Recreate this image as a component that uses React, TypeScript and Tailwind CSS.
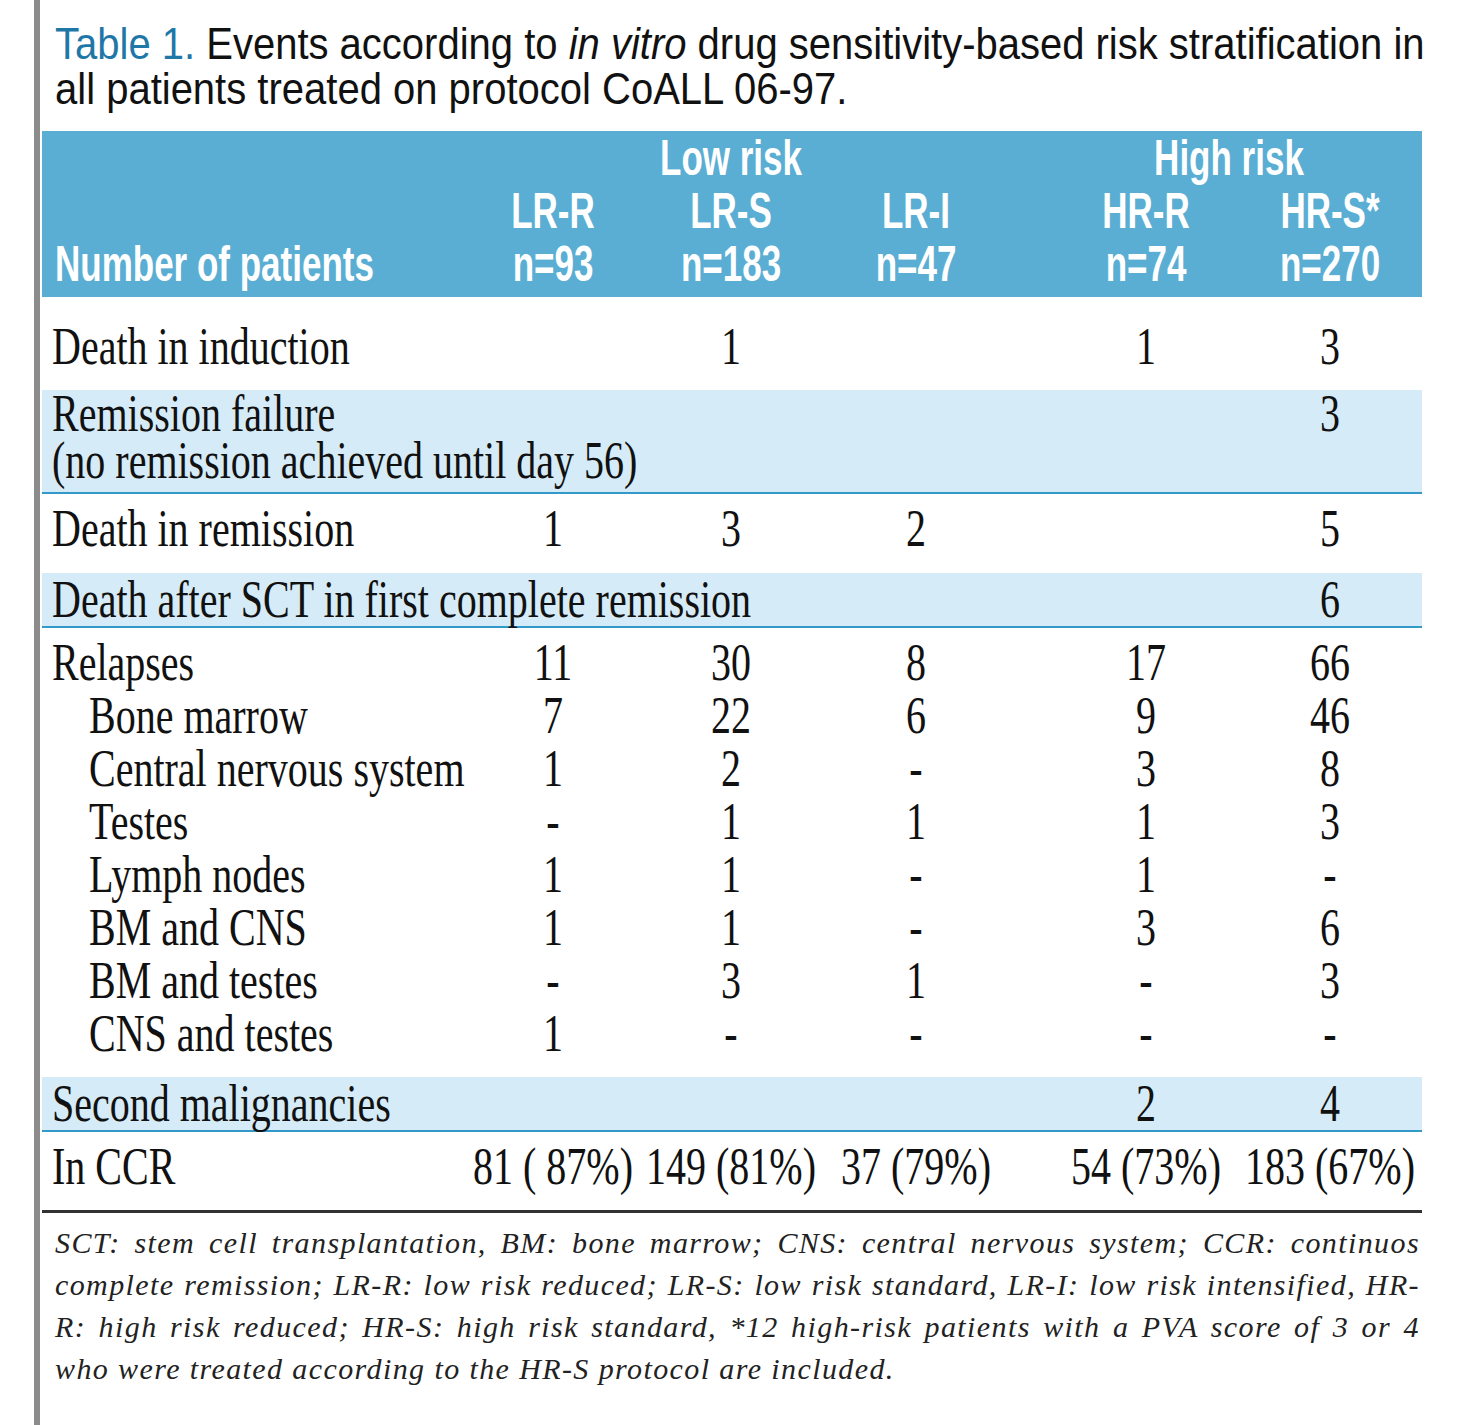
import React from 'react';

// column template shared by header and body rows
const cols = 'grid grid-cols-[422px_178px_178px_192px_268px_100px_42px]';

const Tall: React.FC<{ children: React.ReactNode }> = ({ children }) => (
  <span className="inline-block whitespace-nowrap leading-[35px] scale-y-[1.32]">{children}</span>
);

const Head: React.FC<{ children: React.ReactNode }> = ({ children }) => (
  <span className="inline-block whitespace-nowrap leading-[34px] scale-y-[1.45]">{children}</span>
);

interface RowProps {
  label: React.ReactNode;
  values: string[];
  sub?: boolean;
  className?: string;
}

const Row: React.FC<RowProps> = ({ label, values, sub, className = '' }) => (
  <div className={`${cols} ${className}`}>
    <div className={sub ? 'pl-[47px]' : 'pl-[10px]'}>{label}</div>
    {values.map((v, i) => (
      <div key={i} className="flex h-[53px] items-center justify-center">
        {v && <Tall>{v}</Tall>}
      </div>
    ))}
    <div />
  </div>
);

const Label: React.FC<{ children: React.ReactNode }> = ({ children }) => (
  <div className="flex h-[53px] items-center">
    <Tall>{children}</Tall>
  </div>
);

const relapses: [string, string[]][] = [
  ['Bone marrow', ['7', '22', '6', '9', '46']],
  ['Central nervous system', ['1', '2', '-', '3', '8']],
  ['Testes', ['-', '1', '1', '1', '3']],
  ['Lymph nodes', ['1', '1', '-', '1', '-']],
  ['BM and CNS', ['1', '1', '-', '3', '6']],
  ['BM and testes', ['-', '3', '1', '-', '3']],
  ['CNS and testes', ['1', '-', '-', '-', '-']],
];

const footnote = [
  'SCT: stem cell transplantation, BM: bone marrow; CNS: central nervous system; CCR: continuos',
  'complete remission; LR-R: low risk reduced; LR-S: low risk standard, LR-I: low risk intensified, HR-',
  'R: high risk reduced; HR-S: high risk standard, *12 high-risk patients with a PVA score of 3 or 4',
];

const HeadCell: React.FC<{ children?: React.ReactNode; className?: string }> = ({ children, className = '' }) => (
  <div className={`flex h-[53px] items-center justify-center ${className}`}>{children && <Head>{children}</Head>}</div>
);

export default function App() {
  return (
    <div className="flex min-h-[1425px] bg-white text-[#111]">
      <div className="ml-[34px] w-[6px] bg-[#8c8c8c]" />
      <div className="ml-[2px] w-[1380px]">
        {/* caption */}
        <div className="pl-[13px] pt-[22px] pb-[19px] font-['Liberation_Sans',Arial,sans-serif] text-[40px] leading-[45px] whitespace-nowrap">
          <div>
            <span className="inline-block leading-[40px] scale-y-[1.1]">
              <span className="text-[#1f77a8]">Table 1.</span> Events according to <i>in vitro</i> drug sensitivity-based risk stratification in
            </span>
          </div>
          <div>
            <span className="inline-block leading-[40px] scale-y-[1.1]">all patients treated on protocol CoALL 06-97.</span>
          </div>
        </div>

        {/* header */}
        <div className="bg-[#5aaed3] pb-[7px] font-['Liberation_Sans',Arial,sans-serif] text-[35px] font-bold text-white">
          <div className={cols}>
            <div />
            <div />
            <HeadCell>Low risk</HeadCell>
            <div />
            <HeadCell className="col-span-2 pl-[66px]">High risk</HeadCell>
            <div />
          </div>
          <div className={cols}>
            <div />
            {['LR-R', 'LR-S', 'LR-I', 'HR-R', 'HR-S*'].map((h) => (
              <HeadCell key={h}>{h}</HeadCell>
            ))}
            <div />
          </div>
          <div className={cols}>
            <HeadCell className="!justify-start pl-[13px]">Number of patients</HeadCell>
            {['n=93', 'n=183', 'n=47', 'n=74', 'n=270'].map((h) => (
              <HeadCell key={h}>{h}</HeadCell>
            ))}
            <div />
          </div>
        </div>

        {/* body */}
        <div className="font-['Liberation_Serif','Times_New_Roman',serif] text-[40px]">
          <Row className="pt-[23px] pb-[17px]" label={<Label>Death in induction</Label>} values={['', '1', '', '1', '3']} />
          <div className={`${cols} bg-[#d5ebf7] pb-[8px] border-b-2 border-[#3399c8]`}>
            <div className="pl-[10px]">
              <div className="flex h-[47px] items-center">
                <Tall>Remission failure</Tall>
              </div>
              <div className="flex h-[47px] items-center">
                <Tall>(no remission achieved until day 56)</Tall>
              </div>
            </div>
            <div />
            <div />
            <div />
            <div />
            <div className="flex h-[47px] items-center justify-center">
              <Tall>3</Tall>
            </div>
            <div />
          </div>
          <Row className="pt-[8px] pb-[18px]" label={<Label>Death in remission</Label>} values={['1', '3', '2', '', '5']} />
          <Row
            className="bg-[#d5ebf7] border-b-2 border-[#3399c8]"
            label={<Label>Death after SCT in first complete remission</Label>}
            values={['', '', '', '', '6']}
          />
          <div className="pt-[8px] pb-[18px]">
            <Row label={<Label>Relapses</Label>} values={['11', '30', '8', '17', '66']} />
            {relapses.map(([l, v]) => (
              <Row key={l} sub label={<Label>{l}</Label>} values={v} />
            ))}
          </div>
          <Row
            className="bg-[#d5ebf7] border-b-2 border-[#3399c8] -mt-[1px]"
            label={<Label>Second malignancies</Label>}
            values={['', '', '', '2', '4']}
          />
          <Row
            className="pt-[8px] pb-[17px] border-b-[3px] border-[#333]"
            label={<Label>In CCR</Label>}
            values={['81 ( 87%)', '149 (81%)', '37 (79%)', '54 (73%)', '183 (67%)']}
          />
        </div>

        {/* footnote */}
        <div className="pl-[13px] pr-[2px] pt-[9px] font-['Liberation_Serif','Times_New_Roman',serif] text-[30px] italic leading-[42px] tracking-[1.4px] text-[#222]">
          {footnote.map((line) => (
            <div key={line} className="whitespace-nowrap text-justify [text-align-last:justify]">
              {line}
            </div>
          ))}
          <div className="whitespace-nowrap">who were treated according to the HR-S protocol are included.</div>
        </div>
      </div>
    </div>
  );
}
